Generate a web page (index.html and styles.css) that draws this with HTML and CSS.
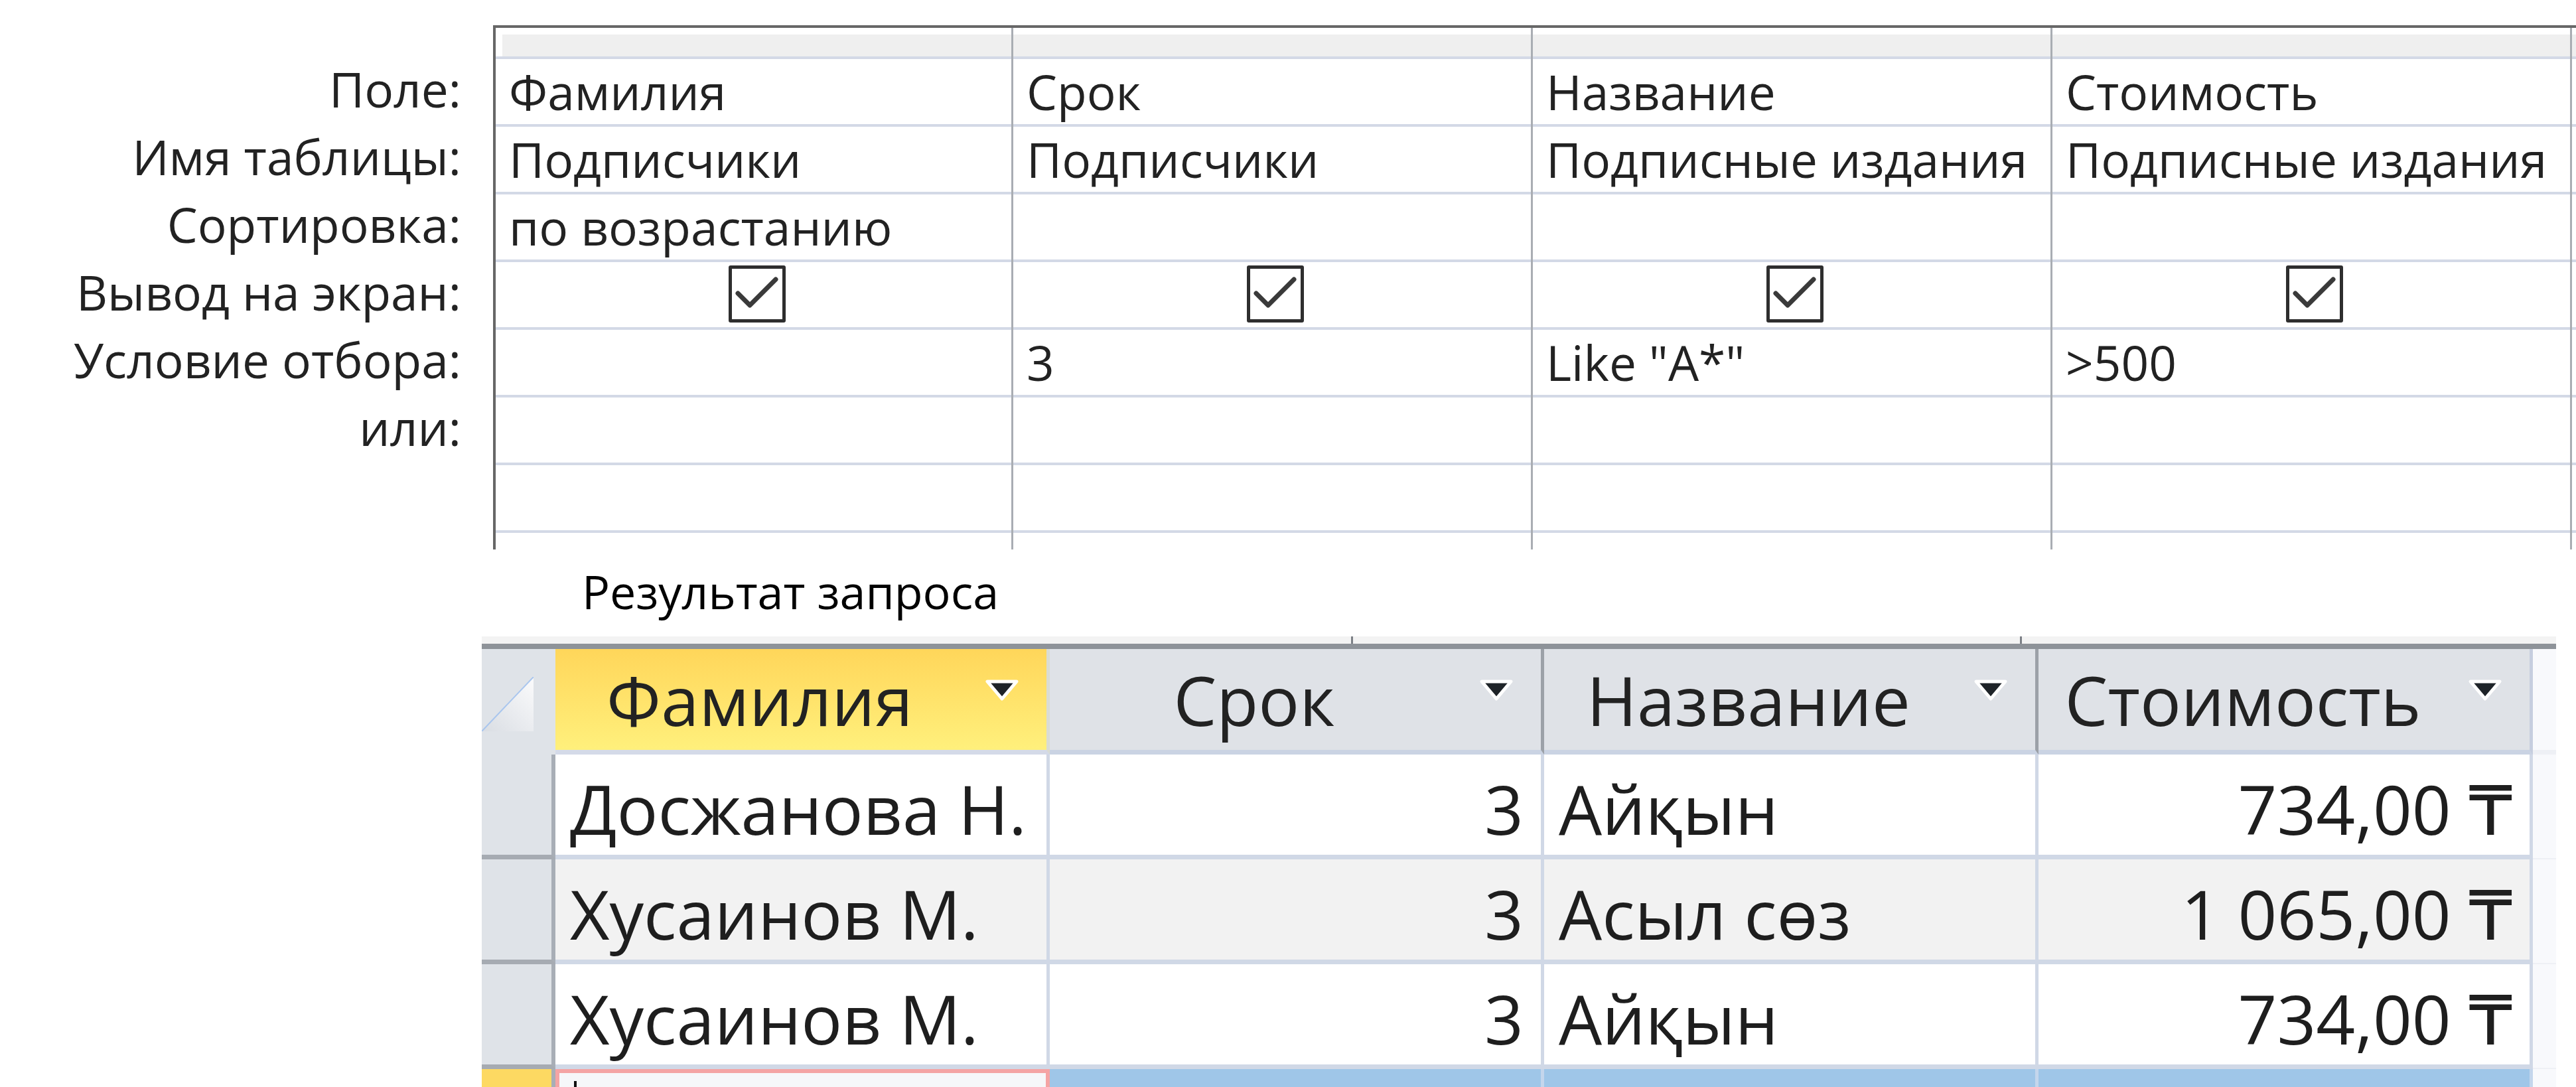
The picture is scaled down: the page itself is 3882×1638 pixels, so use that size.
FILE: index.html
```html
<!DOCTYPE html>
<html lang="ru">
<head>
<meta charset="utf-8">
<title>Запрос</title>
<link rel="stylesheet" href="styles.css">
</head>
<body>
<div class="page">
  <section class="design">
    <div class="labels">
      <div class="lab-head"></div>
      <div class="lab">Поле:</div>
      <div class="lab">Имя таблицы:</div>
      <div class="lab">Сортировка:</div>
      <div class="lab">Вывод на экран:</div>
      <div class="lab">Условие отбора:</div>
      <div class="lab">или:</div>
    </div>
    <div class="qgrid">
      <div class="qcol qcol-first">
        <div class="qhead"><div class="band"></div></div>
        <div class="qcell">Фамилия</div>
        <div class="qcell">Подписчики</div>
        <div class="qcell">по возрастанию</div>
        <div class="qcell chk"><span class="box"><svg viewBox="0 0 76 76" width="76" height="76"><polyline points="9,37 27,55 66,16" /></svg></span></div>
        <div class="qcell"></div>
        <div class="qcell"></div>
        <div class="qcell"></div>
        <div class="qfill"></div>
      </div>
      <div class="qcol">
        <div class="qhead"><div class="band"></div></div>
        <div class="qcell">Срок</div>
        <div class="qcell">Подписчики</div>
        <div class="qcell"></div>
        <div class="qcell chk"><span class="box"><svg viewBox="0 0 76 76" width="76" height="76"><polyline points="9,37 27,55 66,16" /></svg></span></div>
        <div class="qcell">3</div>
        <div class="qcell"></div>
        <div class="qcell"></div>
        <div class="qfill"></div>
      </div>
      <div class="qcol">
        <div class="qhead"><div class="band"></div></div>
        <div class="qcell">Название</div>
        <div class="qcell">Подписные издания</div>
        <div class="qcell"></div>
        <div class="qcell chk"><span class="box"><svg viewBox="0 0 76 76" width="76" height="76"><polyline points="9,37 27,55 66,16" /></svg></span></div>
        <div class="qcell">Like "A*"</div>
        <div class="qcell"></div>
        <div class="qcell"></div>
        <div class="qfill"></div>
      </div>
      <div class="qcol">
        <div class="qhead"><div class="band"></div></div>
        <div class="qcell">Стоимость</div>
        <div class="qcell">Подписные издания</div>
        <div class="qcell"></div>
        <div class="qcell chk"><span class="box"><svg viewBox="0 0 76 76" width="76" height="76"><polyline points="9,37 27,55 66,16" /></svg></span></div>
        <div class="qcell">&gt;500</div>
        <div class="qcell"></div>
        <div class="qcell"></div>
        <div class="qfill"></div>
      </div>
      <div class="qcol qcol-rest">
        <div class="qhead"><div class="band"></div></div>
        <div class="qcell"></div>
        <div class="qcell"></div>
        <div class="qcell"></div>
        <div class="qcell"></div>
        <div class="qcell"></div>
        <div class="qcell"></div>
        <div class="qcell"></div>
        <div class="qfill"></div>
      </div>
    </div>
  </section>

  <div class="caption">Результат запроса</div>

  <section class="sheet">
    <div class="sheet-top">
      <span class="tick tick-a"></span>
      <span class="tick tick-b"></span>
    </div>
    <div class="srow shead">
      <div class="sel sel-head">
        <svg class="corner" viewBox="0 0 78 82" width="78" height="82">
          <defs>
            <linearGradient id="cg" x1="1" y1="0" x2="0" y2="1">
              <stop offset="0" stop-color="#fbfbfc"/>
              <stop offset="1" stop-color="#d9dde3"/>
            </linearGradient>
          </defs>
          <polygon points="0,82 78,0 78,82" fill="url(#cg)"/>
          <line x1="0" y1="82" x2="78" y2="0" stroke="#a9c6ee" stroke-width="2"/>
        </svg>
      </div>
      <div class="hcell hcell-active"><span class="htext">Фамилия</span><svg class="arrow" viewBox="0 0 56 36" width="56" height="36"><polygon points="6,5 50,5 28,31" fill="#1e2328" stroke="#ffffff" stroke-width="5" stroke-linejoin="round"/></svg></div>
      <div class="hcell"><span class="htext">Срок</span><svg class="arrow" viewBox="0 0 56 36" width="56" height="36"><polygon points="6,5 50,5 28,31" fill="#1e2328" stroke="#ffffff" stroke-width="5" stroke-linejoin="round"/></svg></div>
      <div class="hcell"><span class="htext">Название</span><svg class="arrow" viewBox="0 0 56 36" width="56" height="36"><polygon points="6,5 50,5 28,31" fill="#1e2328" stroke="#ffffff" stroke-width="5" stroke-linejoin="round"/></svg></div>
      <div class="hcell hcell-last"><span class="htext">Стоимость</span><svg class="arrow" viewBox="0 0 56 36" width="56" height="36"><polygon points="6,5 50,5 28,31" fill="#1e2328" stroke="#ffffff" stroke-width="5" stroke-linejoin="round"/></svg></div>
      <div class="tail tail-head"></div>
    </div>

    <div class="srow">
      <div class="sel"></div>
      <div class="dcell">Досжанова Н.</div>
      <div class="dcell num">3</div>
      <div class="dcell">Айқын</div>
      <div class="dcell num">734,00 ₸</div>
      <div class="tail"></div>
    </div>
    <div class="srow alt">
      <div class="sel"></div>
      <div class="dcell">Хусаинов М.</div>
      <div class="dcell num">3</div>
      <div class="dcell">Асыл сөз</div>
      <div class="dcell num">1 065,00 ₸</div>
      <div class="tail"></div>
    </div>
    <div class="srow">
      <div class="sel"></div>
      <div class="dcell">Хусаинов М.</div>
      <div class="dcell num">3</div>
      <div class="dcell">Айқын</div>
      <div class="dcell num">734,00 ₸</div>
      <div class="tail"></div>
    </div>
    <div class="srow snew">
      <div class="sel sel-new"></div>
      <div class="dcell dcell-edit"><span class="caret"></span></div>
      <div class="dcell dcell-blue"></div>
      <div class="dcell dcell-blue"></div>
      <div class="dcell dcell-blue"></div>
      <div class="tail"></div>
    </div>
  </section>
</div>
</body>
</html>
```

FILE: styles.css
```css
html, body {
  margin: 0;
  padding: 0;
  background: #ffffff;
}

body {
  width: 3882px;
  height: 1638px;
  overflow: hidden;
  font-family: "Open Sans", "DejaVu Sans", sans-serif;
  font-weight: 500;
  color: #222222;
}

.page {
  display: flex;
  flex-direction: column;
  width: 3882px;
  height: 1638px;
}

/* ---------- query design grid ---------- */
.design {
  display: flex;
  margin-top: 38px;
  height: 790px;
}

.labels {
  width: 743px;
  flex: none;
  display: flex;
  flex-direction: column;
  padding-top: 4px;
}

.lab-head {
  height: 47px;
}

.lab {
  height: 102px;
  box-sizing: border-box;
  display: flex;
  align-items: center;
  justify-content: flex-end;
  padding-right: 48px;
  padding-bottom: 14px;
  font-size: 73px;
  white-space: nowrap;
}

.qgrid {
  flex: 1;
  display: flex;
  border-top: 4px solid #676767;
  border-left: 4px solid #676767;
  overflow: hidden;
}

.qcol {
  width: 783px;
  flex: none;
  box-sizing: border-box;
  border-right: 3px solid #a9adb3;
  display: flex;
  flex-direction: column;
}

.qcol-first {
  width: 780px;
}

.qcol-rest {
  flex: 1;
  width: auto;
  border-right: none;
}

.qhead {
  height: 47px;
  box-sizing: border-box;
  padding-top: 10px;
  border-bottom: 4px solid #d3d9e6;
  flex: none;
}

.band {
  height: 100%;
  background: #efefef;
}

.qcol-first .band {
  margin-left: 10px;
}

.qcell {
  height: 102px;
  flex: none;
  box-sizing: border-box;
  border-bottom: 4px solid #d3d9e6;
  display: flex;
  align-items: center;
  padding-left: 20px;
  padding-bottom: 2px;
  font-size: 73px;
  white-space: nowrap;
  overflow: hidden;
}

.qcell.chk {
  justify-content: center;
  padding-left: 10px;
}

.box {
  width: 86px;
  height: 86px;
  box-sizing: border-box;
  border: 5px solid #2e2e2e;
  border-radius: 3px;
  display: flex;
  align-items: center;
  justify-content: center;
}

.box svg polyline {
  fill: none;
  stroke: #3a3a3a;
  stroke-width: 7;
  stroke-linecap: round;
  stroke-linejoin: round;
}

.qfill {
  flex: 1;
}

/* ---------- caption ---------- */
.caption {
  margin-top: 17px;
  margin-left: 877px;
  font-size: 70px;
  font-weight: 400;
  line-height: 93px;
  height: 93px;
  color: #000000;
  white-space: nowrap;
}

/* ---------- datasheet ---------- */
.sheet {
  margin-top: 21px;
  margin-left: 726px;
  width: 3126px;
  display: flex;
  flex-direction: column;
  flex: 1;
  overflow: hidden;
}

.sheet-top {
  height: 11px;
  background: #f3f3f3;
  border-bottom: 8px solid #8e9399;
  display: flex;
}

.tick {
  width: 3px;
  height: 11px;
  background: #7c8086;
}

.tick-a {
  margin-left: 1310px;
}

.tick-b {
  margin-left: 1005px;
}

.srow {
  display: flex;
  height: 158px;
  flex: none;
}

.shead {
  height: 159px;
}

.sel {
  width: 111px;
  flex: none;
  box-sizing: border-box;
  background: #dfe3e8;
  border-right: 6px solid #a8aeb6;
  border-bottom: 7px solid #a6abb2;
}

.sel-head {
  border-right-color: #dfe3e8;
  border-bottom-color: #dfe3e8;
  display: flex;
  align-items: flex-start;
  padding-top: 42px;
}

.corner {
  display: block;
}

.hcell {
  width: 745px;
  flex: none;
  box-sizing: border-box;
  background: #dfe2e7;
  border-right: 5px solid #9ca1a8;
  border-bottom: 7px solid #cad3e3;
  display: flex;
  align-items: center;
  padding-right: 124px;
  position: relative;
  font-size: 103px;
  color: #222222;
}

.hcell-active {
  background: linear-gradient(#ffd65a, #fff07c);
  border-right-color: #d9dcd4;
  border-bottom-color: #d4dae8;
}

.hcell-last {
  border-right-color: #c6cedf;
}

.htext {
  flex: 1;
  text-align: center;
  white-space: nowrap;
}

.arrow {
  position: absolute;
  right: 39px;
  top: 44px;
}

.tail {
  flex: 1;
  background: #f8f9fc;
  border-bottom: 2px solid #eef0f5;
}

.tail-head {
  border-bottom: 7px solid #eef0f5;
}

.dcell {
  width: 745px;
  flex: none;
  box-sizing: border-box;
  background: #ffffff;
  border-right: 5px solid #d0d8e6;
  border-bottom: 7px solid #d0d8e6;
  display: flex;
  align-items: center;
  padding: 10px 26px 0 22px;
  font-size: 103px;
  white-space: nowrap;
  overflow: hidden;
  color: #1e1e1e;
}

.alt .dcell {
  background: #f2f2f2;
}

.dcell.num {
  justify-content: flex-end;
  padding-right: 26px;
}

.snew {
  height: 60px;
}

.sel-new {
  background: #fdd962;
  border-bottom: none;
}

.dcell-edit {
  background: #f6f7f9;
  border: 6px solid #f4a4a4;
  border-bottom: none;
  align-items: flex-start;
  padding-top: 12px;
}

.caret {
  width: 4px;
  height: 60px;
  background: #111111;
}

.dcell-blue {
  background: #9fc6e8;
  border-right-color: #c4d6ec;
  border-bottom: none;
}
```
